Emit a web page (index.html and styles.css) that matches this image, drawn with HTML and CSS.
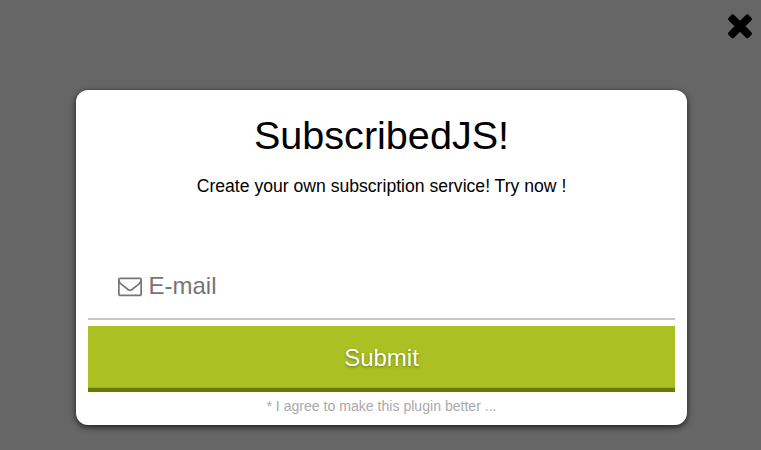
FILE: index.html
```html
<!DOCTYPE html>
<html lang="en">
<head>
<meta charset="utf-8">
<title>SubscribedJS</title>
<link rel="stylesheet" href="styles.css">
</head>
<body>
<div class="overlay">
  <button class="close" aria-label="Close">
    <svg viewBox="0 0 1792 1792" width="36" height="36"><path d="M1490 1322q0 40-28 68l-136 136q-28 28-68 28t-68-28l-294-294-294 294q-28 28-68 28t-68-28l-136-136q-28-28-28-68t28-68l294-294-294-294q-28-28-28-68t28-68l136-136q28-28 68-28t68 28l294 294 294-294q28-28 68-28t68 28l136 136q28 28 28 68t-28 68l-294 294 294 294q28 28 28 68z"/></svg>
  </button>
  <form class="card">
    <h1 class="title">SubscribedJS!</h1>
    <p class="lead">Create your own subscription service! Try now !</p>
    <label class="field">
      <svg class="envelope" viewBox="0 0 1792 1792" width="24" height="24"><path d="M1664 1504v-768q-32 36-69 66-268 206-426 338-51 43-83 67t-86.5 48.5-102.5 24.5h-2q-48 0-102.5-24.5t-86.5-48.5-83-67q-158-132-426-338-37-30-69-66v768q0 13 9.5 22.5t22.5 9.5h1472q13 0 22.5-9.5t9.5-22.5zm0-1051v-24.5l-.5-13-3-12.5-5.5-9-9-7.5-14-2.5h-1472q-13 0-22.5 9.5t-9.5 22.5q0 168 147 284 193 152 401 317 6 5 35 29.5t46 37.5 44.5 31.5 50.5 27.5 43 9h2q20 0 43-9t50.5-27.5 44.5-31.5 46-37.5 35-29.5q208-165 401-317 54-43 100.5-115.5t46.5-131.5zm128-37v1088q0 66-47 113t-113 47h-1472q-66 0-113-47t-47-113v-1088q0-66 47-113t113-47h1472q66 0 113 47t47 113z"/></svg>
      <span>E-mail</span>
    </label>
    <button class="submit" type="button">Submit</button>
    <p class="note">* I agree to make this plugin better ...</p>
  </form>
</div>
</body>
</html>
```

FILE: styles.css
```css
* {
  box-sizing: border-box;
}

body {
  margin: 0;
  font-family: "Liberation Sans", Arial, sans-serif;
}

.overlay {
  position: relative;
  height: 450px;
  padding: 90px 74px 0 76px;
  background: #666;
  overflow: hidden;
}

.close {
  position: absolute;
  top: 7px;
  right: 3px;
  padding: 0;
  border: 0;
  background: none;
}

.close svg {
  display: block;
}

.card {
  height: 335px;
  padding: 22px 12px 0;
  border-radius: 12px;
  background: #fff;
  box-shadow: 0 2px 6px rgba(0, 0, 0, 0.75);
  text-align: center;
}

.title {
  margin: 0;
  font-size: 39.6px;
  font-weight: 400;
  line-height: 46px;
}

.lead {
  margin: 18px 0 0;
  font-size: 17.6px;
  line-height: 20px;
}

.field {
  display: flex;
  align-items: center;
  gap: 6.5px;
  height: 68px;
  margin-top: 56px;
  padding: 2px 0 0 30px;
  border-bottom: 2px solid #c8c8c8;
  color: #757575;
  font-size: 24px;
  line-height: 28px;
}

.envelope {
  fill: currentColor;
}

.submit {
  display: block;
  width: 100%;
  height: 66px;
  margin-top: 6px;
  padding: 2px 0 0;
  border: 0;
  border-bottom: 4px solid #697a00;
  background: #abc123;
  box-shadow: inset 0 -1px #9db019;
  color: #fff;
  font: inherit;
  font-size: 24px;
  text-shadow: 0 1px 3px rgba(0, 0, 0, 0.4);
}

.note {
  margin: 6px 0 0;
  color: #a9a9a9;
  font-size: 14.08px;
  line-height: 16px;
}
```
